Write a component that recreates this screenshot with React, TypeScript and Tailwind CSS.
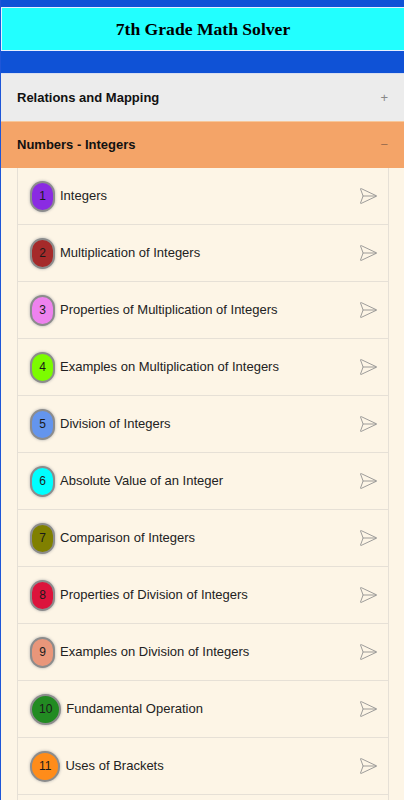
import { SendHorizontal } from "lucide-react";

interface Topic {
  n: number;
  title: string;
  color: string;
}

const topics: Topic[] = [
  { n: 1, title: "Integers", color: "bg-[#8a2be2]" },
  { n: 2, title: "Multiplication of Integers", color: "bg-[#a52a2a]" },
  { n: 3, title: "Properties of Multiplication of Integers", color: "bg-[#ee82ee]" },
  { n: 4, title: "Examples on Multiplication of Integers", color: "bg-[#7cfc00]" },
  { n: 5, title: "Division of Integers", color: "bg-[#6495ed]" },
  { n: 6, title: "Absolute Value of an Integer", color: "bg-[#00ffff]" },
  { n: 7, title: "Comparison of Integers", color: "bg-[#808000]" },
  { n: 8, title: "Properties of Division of Integers", color: "bg-[#dc143c]" },
  { n: 9, title: "Examples on Division of Integers", color: "bg-[#e9967a]" },
  { n: 10, title: "Fundamental Operation", color: "bg-[#228b22]" },
  { n: 11, title: "Uses of Brackets", color: "bg-[#ff8c1a]" },
  { n: 12, title: "Simplification of Brackets", color: "bg-[#ff6347]" },
];

export default function App() {
  return (
    <div className="min-h-screen bg-[#fdf5e6] border-l border-[#1e56d8] font-['Liberation_Sans',Arial,sans-serif]">
      {/* top bar */}
      <div className="bg-[#0f52d6] pt-[7px]">
        <div className="h-[44px] bg-[#22ffff] border-t border-l border-b border-[#e6f0ff] flex items-center justify-center">
          <h1 className="font-['Liberation_Serif',serif] font-bold text-[17.6px] text-black">7th Grade Math Solver</h1>
        </div>
        <div className="h-[22px]" />
      </div>

      {/* collapsed section */}
      <div className="h-[48px] bg-[#ececec] border-t border-[#d8def0] flex items-center justify-between pl-4 pr-4">
        <span className="font-bold text-[13px] text-[#111]">Relations and Mapping</span>
        <span className="text-[13px] text-[#888]">+</span>
      </div>

      {/* open section */}
      <div className="h-[47px] bg-[#f4a468] border-t border-[#f7c79a] flex items-center justify-between pl-4 pr-4">
        <span className="font-bold text-[13px] text-[#111]">Numbers - Integers</span>
        <span className="text-[13px] text-[#a07050]">&minus;</span>
      </div>

      <div className="pl-4 pr-[15px]">
        <ul className="border-l border-r border-[#e6e0d6]">
          {topics.map((t) => (
            <li
              key={t.n}
              className="h-[57px] border-b border-[#e6e0d6] flex items-center pl-[12px] pr-[10px]"
            >
              <span
                className={`${t.color} h-[31px] min-w-[25px] px-[7px] rounded-full border-2 border-[#8c8c8c] shadow-[0_0_3px_#aaa] flex items-center justify-center text-[12px] text-[#1a1a1a]`}
              >
                {t.n}
              </span>
              <span className="ml-[5px] text-[13px] text-[#222] flex-1">{t.title}</span>
              <SendHorizontal size={20} strokeWidth={1} className="text-[#8a8a8a]" />
            </li>
          ))}
        </ul>
      </div>
    </div>
  );
}
